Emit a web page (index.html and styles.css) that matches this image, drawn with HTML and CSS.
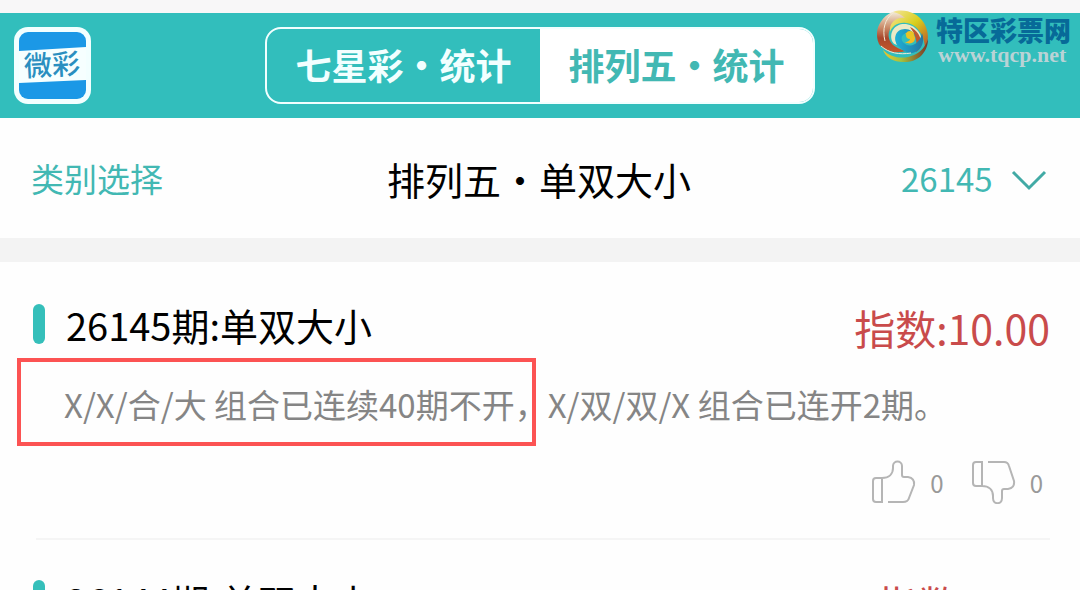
FILE: index.html
```html
<!DOCTYPE html>
<html lang="zh-CN">
<head>
    <meta charset="UTF-8">
    <meta name="viewport" content="width=device-width, initial-scale=1.0">
    <title>排列五・统计</title>
    <link rel="stylesheet" href="styles.css">
</head>
<body>

    <header class="header">
        <a class="logo" href="#" aria-label="微彩">
            <svg viewBox="0 0 77 77">
                <rect width="77" height="77" rx="14" fill="#f2ffff"/>
                <rect x="5" y="5" width="67" height="67" rx="9" fill="#1b98e6"/>
                <path d="M5 24L72 20V53L5 56Z" fill="#f6ffff"/>
                <text x="10" y="48" transform="rotate(-3 38 38)" class="logo-text">微彩</text>
            </svg>
        </a>
        <nav class="tabs">
            <button type="button" class="tab">七星彩・统计</button>
            <button type="button" class="tab active">排列五・统计</button>
        </nav>
    </header>

    <div class="watermark">
        <svg class="swirl" viewBox="0 0 52 52">
            <defs>
                <linearGradient id="ring" x1="0" y1="0" x2="0" y2="1">
                    <stop offset="0" stop-color="#f6f0dc"/>
                    <stop offset="0.4" stop-color="#c98a68"/>
                    <stop offset="0.65" stop-color="#a8482c"/>
                    <stop offset="1" stop-color="#c4572a"/>
                </linearGradient>
                <linearGradient id="gold" x1="0" y1="0" x2="1" y2="1">
                    <stop offset="0" stop-color="#f7e6a0"/>
                    <stop offset="0.5" stop-color="#d8cf1c"/>
                    <stop offset="1" stop-color="#b9502c"/>
                </linearGradient>
                <linearGradient id="blue" x1="0" y1="0" x2="1" y2="0">
                    <stop offset="0" stop-color="#1fb0d6"/>
                    <stop offset="1" stop-color="#2377a4"/>
                </linearGradient>
                <linearGradient id="tail" x1="0" y1="0" x2="1" y2="0">
                    <stop offset="0" stop-color="#f0c52a"/>
                    <stop offset="0.4" stop-color="#a5c23d"/>
                    <stop offset="1" stop-color="#7a3426"/>
                </linearGradient>
            </defs>
            <path d="M15 2C1 9-3 23 2 34C8 42 19 44 29 41C15 38 10 30 12 22C15 11 27 6 37 11C32 3 24 0 15 2Z" fill="url(#ring)"/>
            <path d="M16 2C27-2 41 3 47 13C52 22 52 30 48 37C47 25 40 14 29 13C21 12 15 16 13 22C12 12 20 7 28 8C25 5 21 3 16 2Z" fill="url(#gold)"/>
            <path d="M15 31C12 22 18 14 27 14C38 14 46 24 45 34C41 26 34 18 26 20C19 22 17 28 20 35C17 34 16 33 15 31Z" fill="#eceac6"/>
            <path d="M33 17C40 20 45 27 44 36C43 39 41 41 39 42C41 31 38 24 33 17Z" fill="#bd5730"/>
            <path d="M22 37C15 30 18 19 28 19C33 19 37 22 38 27C34 23 29 22 26 25C23 28 25 33 30 35C37 37 43 32 45 23C49 34 42 44 32 43C28 42 25 40 22 37Z" fill="url(#blue)"/>
            <path d="M28 24C32 20 38 23 38 28C38 33 33 35 28 32C31 32 34 30 33 27C32 25 30 24 28 24Z" fill="#f3bd24"/>
            <circle cx="33" cy="25" r="4" fill="#e9c324"/>
            <path d="M6 40C15 49 28 49 37 45C44 42 49 36 51 29C51 43 40 53 26 52C17 52 9 48 6 40Z" fill="url(#tail)"/>
            <path d="M4 36C12 43 22 45 34 43M16 3C8 9 5 19 8 31" fill="none" stroke="#f2ead6" stroke-width="1"/>
        </svg>
        <div class="watermark-text">
            <span class="watermark-name">特区彩票网</span>
            <span class="watermark-url">www.tqcp.net</span>
        </div>
    </div>

    <div class="filter">
        <a class="category" href="#">类别选择</a>
        <h1>排列五・单双大小</h1>
        <div class="issue">
            <select id="issue" aria-label="期号">
                <option>26145</option>
                <option>26144</option>
            </select>
            <svg class="arrow" viewBox="0 0 36 22"><path d="M2 3L18 19L34 3"/></svg>
        </div>
    </div>

    <main class="list">
        <article class="item">
            <div class="item-head">
                <h2>26145期:单双大小</h2>
                <span class="index">指数:10.00</span>
            </div>
            <p class="desc">X/X/合/大 组合已连续40期不开，X/双/双/X 组合已连开2期。</p>
            <div class="votes">
                <button type="button" class="vote" aria-label="赞">
                    <svg viewBox="0 0 44 44"><path d="M10 18H4Q1 18 1 21V39Q1 42 4 42H10ZM10 18C17 18 21 14 21 8V6C21 0 30 0 30 6V15Q30 17 32 17H36Q43 18 42 25L37 38Q36 42 31 42H16"/></svg>
                    <span>0</span>
                </button>
                <button type="button" class="vote" aria-label="踩">
                    <svg viewBox="0 0 44 44"><path d="M10 26H4Q1 26 1 23V5Q1 2 4 2H10ZM10 26C17 26 21 30 21 36V38C21 45 30 45 30 38V31Q30 29 32 29H36Q43 28 42 21L37 6Q36 2 32 2H16"/></svg>
                    <span>0</span>
                </button>
            </div>
            <div class="highlight"></div>
        </article>

        <article class="item">
            <div class="item-head">
                <h2>26144期:单双大小</h2>
                <span class="index">指数:9.00</span>
            </div>
        </article>
    </main>

</body>
</html>
```
FILE: styles.css
```css
* {
    box-sizing: border-box;
}
body {
    margin: 0;
    height: 100vh;
    overflow: hidden;
    background: #fefefe;
    font-family: "Noto Sans CJK SC", sans-serif;
    color: #000;
}
button, select {
    font-family: inherit;
    background: none;
    border: none;
    padding: 0;
    cursor: pointer;
}
h1, h2, p {
    margin: 0;
    font-weight: normal;
}
a {
    text-decoration: none;
}
.header {
    display: flex;
    justify-content: center;
    padding: 14px;
    border-top: 13px solid #f8f7f8;
    background: #32bebc;
    background-clip: padding-box;
}
.logo {
    flex: 1;
    height: 77px;
}
.logo svg {
    display: block;
    width: 77px;
    height: 77px;
}
.logo-text {
    font-size: 28px;
    font-weight: 500;
    fill: #2a8fc0;
}
.header::after {
    content: "";
    flex: 1;
}
.tabs {
    display: flex;
    width: 550px;
    height: 77px;
    border: 2px solid #f2ffff;
    border-radius: 16px;
    overflow: hidden;
}
.tab {
    flex: 1;
    padding-bottom: 3px;
    font-size: 36px;
    font-weight: bold;
    color: #f2ffff;
}
.tab.active {
    background: #fff;
    color: #42b8b3;
}
.watermark {
    position: absolute;
    top: 10px;
    right: 9px;
    display: flex;
    gap: 7px;
}
.swirl {
    width: 52px;
    height: 52px;
}
.watermark-text {
    display: flex;
    flex-direction: column;
    padding-top: 4px;
}
.watermark-name {
    font-size: 27px;
    font-weight: 900;
    line-height: 32px;
    color: #076a98;
}
.watermark-url {
    padding-left: 2px;
    font-family: "Liberation Serif", serif;
    font-size: 22px;
    font-weight: bold;
    line-height: 18px;
    color: #b9d3d6;
}
.filter {
    display: grid;
    grid-template-columns: 1fr auto 1fr;
    align-items: center;
    height: 120px;
    padding: 0 33px 0 31px;
}
.category {
    font-size: 33px;
    color: #42b8b3;
}
h1 {
    font-size: 38px;
}
.issue {
    display: flex;
    justify-content: flex-end;
    align-items: center;
    gap: 18px;
}
.issue select {
    appearance: none;
    font-size: 33px;
    color: #42b8b3;
}
.arrow {
    width: 36px;
    height: 22px;
    margin-top: 4px;
    fill: none;
    stroke: #42aaa5;
    stroke-width: 3;
}
.list {
    border-top: 24px solid #f3f3f3;
    padding: 2px 30px 0 33px;
}
.item {
    position: relative;
    padding: 30px 0 36px;
}
.item + .item::before {
    content: "";
    position: absolute;
    top: -2px;
    left: 3px;
    right: 0;
    height: 2px;
    background: #f5f5f5;
}
.item-head {
    display: flex;
    justify-content: space-between;
    align-items: center;
    height: 60px;
}
h2 {
    display: flex;
    align-items: center;
    gap: 21px;
    font-size: 38px;
}
h2::before {
    content: "";
    width: 12px;
    height: 40px;
    border-radius: 6px;
    background: #35bfba;
}
.index {
    padding-top: 5px;
    font-size: 41px;
    color: #c94b4b;
}
.desc {
    margin: 24px 0 30px 31px;
    font-size: 33px;
    line-height: 52px;
    color: #858585;
}
.votes {
    display: flex;
    justify-content: flex-end;
    gap: 28px;
    padding-right: 7px;
}
.vote {
    display: flex;
    align-items: center;
    gap: 14px;
    height: 44px;
    font-size: 24px;
    color: #999;
}
.vote svg {
    width: 44px;
    height: 44px;
    fill: none;
    stroke: #b5b5b5;
    stroke-width: 2;
}
/* marks the first combination */
.highlight {
    position: absolute;
    top: 94px;
    left: -16px;
    width: 519px;
    height: 88px;
    border: 4px solid #fc5353;
}
```
